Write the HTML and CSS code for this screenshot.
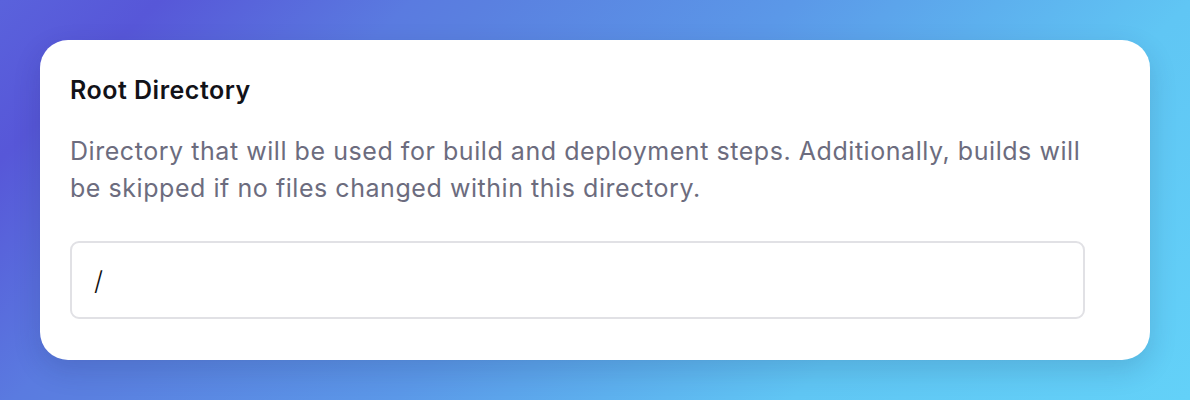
FILE: index.html
```html
<!DOCTYPE html>
<html>
<head>
<meta charset="utf-8">
<link rel="stylesheet" href="styles.css">
</head>
<body>
<div class="stage">
  <section class="card">
    <h2 class="title">Root Directory</h2>
    <p class="desc">Directory that will be used for build and deployment steps. Additionally, builds will be skipped if no files changed within this directory.</p>
    <div class="field">/</div>
  </section>
</div>
</body>
</html>
```
FILE: styles.css
```css
* { box-sizing: border-box; }
html, body { margin: 0; padding: 0; }
body {
  width: 1190px;
  height: 400px;
  overflow: hidden;
  font-family: Inter, "Noto Sans", sans-serif;
}
.stage {
  height: 400px;
  padding: 40px;
  background: linear-gradient(135deg, #5a62dc 0%, #5757d8 10%, #5a7be0 26%, #5a80e0 31%, #5b98e8 50%, #5db0ee 63%, #60c6f4 75%, #63d1f8 100%);
}
.card {
  width: 1110px;
  height: 320px;
  background: #fff;
  border-radius: 28px;
  padding: 32px 30px 0 30px;
  box-shadow: 0 10px 28px rgba(20, 30, 80, 0.16);
  display: flex;
  flex-direction: column;
}
.title {
  margin: 0;
  font-size: 25px;
  line-height: 36px;
  font-weight: 600;
  letter-spacing: 0.5px;
  color: #121218;
}
.desc {
  margin: 25px 0 0 0;
  max-width: 1030px;
  font-size: 25px;
  line-height: 37px;
  font-weight: 400;
  letter-spacing: 0.55px;
  color: #6c6c7e;
}
.field {
  margin-top: 34px;
  width: 1015px;
  height: 78px;
  border: 2px solid #e1e1e5;
  border-radius: 9px;
  padding: 0 22px;
  display: flex;
  align-items: center;
  font-size: 26px;
  font-weight: 300;
  color: #111;
}
```
